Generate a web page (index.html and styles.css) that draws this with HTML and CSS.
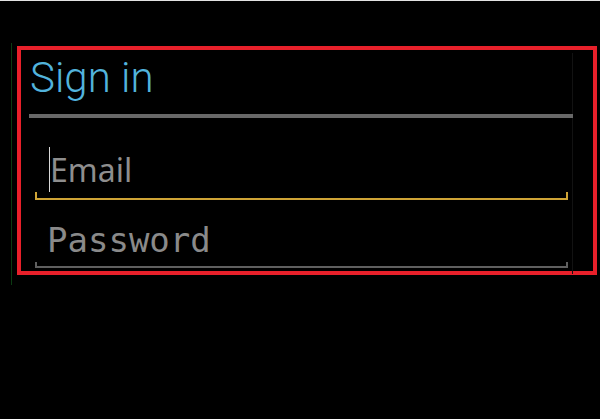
FILE: index.html
```html
<!DOCTYPE html>
<html lang="en">
<head>
    <meta charset="UTF-8">
    <meta name="viewport" content="width=device-width, initial-scale=1.0">
    <title>Sign in</title>
    <link rel="stylesheet" href="styles.css">
</head>
<body>
    <div class="screen">
        <div class="edge"></div>
        <div class="frame">
            <div class="panel">
                <h1 class="title">Sign in</h1>
                <div class="rule"></div>

                <div class="field focused">
                    <div class="input">
                        <span class="caret"></span>
                        <span class="hint hint-email">Email</span>
                    </div>
                    <div class="line"></div>
                </div>

                <div class="field">
                    <div class="input">
                        <span class="hint hint-password">Password</span>
                    </div>
                    <div class="line"></div>
                </div>
            </div>
        </div>
    </div>
</body>
</html>
```

FILE: styles.css
```css
* {
    margin: 0;
    padding: 0;
    box-sizing: border-box;
}

html, body {
    background: #000;
    height: 100%;
}

body {
    font-family: Roboto, "Liberation Sans", sans-serif;
    overflow: hidden;
}

.screen {
    display: flex;
    align-items: flex-start;
    height: 100%;
    border-top: 1px solid #e2e2e2;
    padding-top: 42px;
    padding-left: 11px;
}

.edge {
    width: 1px;
    height: 242px;
    background: #0b3b12;
    margin-right: 5px;
}

.frame {
    width: 580px;
    height: 229px;
    margin-top: 3px;
    border: 4px solid #e8202a;
}

.panel {
    width: 552px;
    height: 100%;
    border-right: 1px solid #121212;
}

.title {
    margin-top: 3px;
    padding-left: 9px;
    font-family: Roboto, "Liberation Sans", sans-serif;
    font-weight: 300;
    font-size: 42px;
    line-height: 50px;
    color: #52b3dc;
}

.rule {
    margin-top: 11px;
    margin-left: 8px;
    width: 544px;
    height: 4px;
    background: #686868;
}

.field {
    margin-left: 14px;
    width: 533px;
}

.field.focused {
    margin-top: 29px;
}

.field + .field {
    margin-top: 17px;
}

.input {
    display: flex;
    height: 45px;
    padding-left: 14px;
}

.caret {
    width: 1px;
    background: #d8d8d8;
}

.hint {
    padding-top: 2px;
    line-height: 43px;
}

.hint-email {
    padding-top: 1px;
    font-family: "Noto Sans", "Open Sans", sans-serif;
    font-size: 32px;
    color: #8e8e8e;
}

.hint-password {
    margin-left: -2px;
    font-family: "DejaVu Sans Mono", "Liberation Mono", monospace;
    font-size: 34px;
    color: #8a8a8a;
}

.line {
    height: 8px;
    border: 2px solid #5f5f5f;
    border-top: none;
}

.field:not(.focused) .line {
    height: 6px;
}

.focused .line {
    border-color: #cfa436;
}
```
